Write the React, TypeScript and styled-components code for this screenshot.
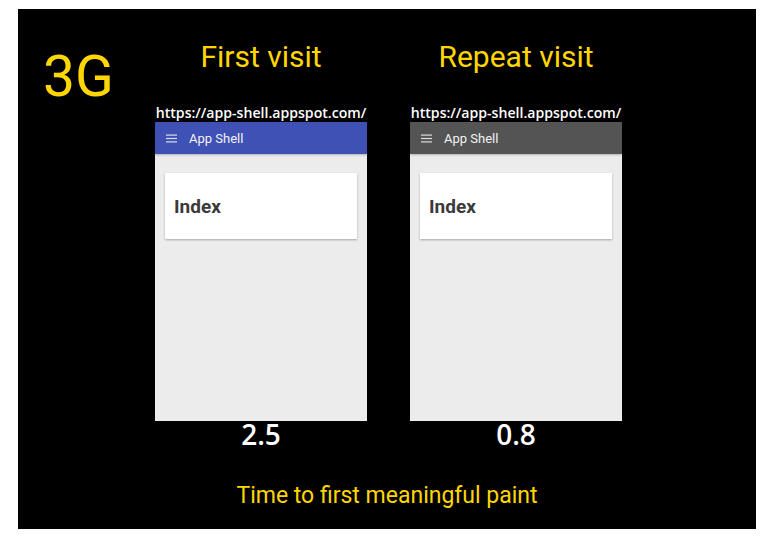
import React from "react";
import styled, { createGlobalStyle } from "styled-components";

const GlobalStyle = createGlobalStyle`
  html, body {
    margin: 0;
    padding: 0;
    background: #ffffff;
  }
`;

const Slide = styled.div`
  box-sizing: border-box;
  margin: 9px 0 0 18px;
  width: 738px;
  height: 520px;
  background: #000000;
  padding-top: 31px;
  display: flex;
  flex-direction: column;
`;

const Top = styled.div`
  display: grid;
  grid-template-columns: 94px 212px 212px;
  column-gap: 43px;
`;

const Network = styled.div`
  padding: 8px 0 0 25px;
  font-family: Roboto, "Liberation Sans", sans-serif;
  font-size: 57px;
  line-height: 57px;
  color: #ffd600;
`;

const Column = styled.div`
  display: flex;
  flex-direction: column;
  align-items: stretch;
`;

const Title = styled.div`
  font-family: Roboto, "Liberation Sans", sans-serif;
  font-size: 30px;
  line-height: 34px;
  color: #ffd600;
  text-align: center;
  margin-bottom: 29px;
`;

const Url = styled.div`
  font-family: "Open Sans", "Liberation Sans", sans-serif;
  font-weight: 600;
  font-size: 14.1px;
  line-height: 19px;
  color: #ffffff;
  text-align: center;
  white-space: nowrap;
`;

const Phone = styled.div`
  height: 299px;
  background: #ececec;
  display: flex;
  flex-direction: column;
`;

const AppBar = styled.div<{ $color: string }>`
  height: 32px;
  background: ${(p) => p.$color};
  display: flex;
  align-items: center;
  padding-left: 11px;
  gap: 12px;
  box-shadow: 0 1px 2px rgba(0, 0, 0, 0.25);
`;

const AppTitle = styled.span`
  font-family: Roboto, "Liberation Sans", sans-serif;
  font-size: 13px;
  color: #f2f2f2;
  padding-top: 1px;
`;

const Card = styled.div`
  margin: 19px 10px 0;
  height: 66px;
  background: #ffffff;
  box-shadow: 0 1px 2px rgba(0, 0, 0, 0.3);
  display: flex;
  align-items: center;
  padding-left: 9px;
  font-family: Roboto, "Liberation Sans", sans-serif;
  font-weight: 700;
  font-size: 19px;
  color: #3a3a3a;
`;

const Score = styled.div`
  font-family: "Open Sans", "Liberation Sans", sans-serif;
  font-weight: 600;
  font-size: 28px;
  line-height: 27px;
  color: #ffffff;
  text-align: center;
`;

const Caption = styled.div`
  margin-top: 35px;
  font-family: Roboto, "Liberation Sans", sans-serif;
  font-size: 23px;
  line-height: 26px;
  color: #ffd600;
  text-align: center;
`;

const Menu = () => (
  <svg width="11" height="9" viewBox="0 0 11 9">
    <g fill="rgba(255,255,255,0.8)">
      <rect x="0" y="0.5" width="11" height="1.2" />
      <rect x="0" y="3.9" width="11" height="1.2" />
      <rect x="0" y="7.3" width="11" height="1.2" />
    </g>
  </svg>
);

interface IVisit {
  title: string;
  bar: string;
  score: string;
}

const visits: IVisit[] = [
  { title: "First visit", bar: "#3f51b5", score: "2.5" },
  { title: "Repeat visit", bar: "#545454", score: "0.8" },
];

const Visit = ({ title, bar, score }: IVisit) => (
  <Column>
    <Title>{title}</Title>
    <Url>https://app-shell.appspot.com/</Url>
    <Phone>
      <AppBar $color={bar}>
        <Menu />
        <AppTitle>App Shell</AppTitle>
      </AppBar>
      <Card>Index</Card>
    </Phone>
    <Score>{score}</Score>
  </Column>
);

export default function App() {
  return (
    <>
      <GlobalStyle />
      <Slide>
        <Top>
          <Network>3G</Network>
          {visits.map((v) => (
            <Visit key={v.title} {...v} />
          ))}
        </Top>
        <Caption>Time to first meaningful paint</Caption>
      </Slide>
    </>
  );
}
